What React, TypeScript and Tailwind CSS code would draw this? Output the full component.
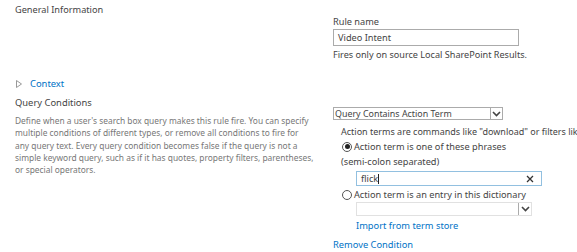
import React from "react";

const Chevron = () => (
  <svg width="9" height="6" viewBox="0 0 9 6" className="block">
    <path d="M1 1 L4.5 4.5 L8 1" fill="none" stroke="#444" strokeWidth="1.6" />
  </svg>
);

export default function App() {
  return (
    <div
      className="w-[577px] h-[252px] overflow-hidden bg-white text-[#444] relative"
      style={{ fontFamily: '"Noto Sans", "Open Sans", sans-serif' }}
    >
      {/* General information */}
      <div className="flex">
        <div className="w-[333px] pl-[15px] pt-[4px] text-[9.2px] leading-[12px]">General Information</div>
        <div className="pt-[15px]">
          <div className="text-[9.2px] leading-[13px]">Rule name</div>
          <div className="mt-[1px] w-[186px] h-[17px] border border-[#ababab] px-[4px] text-[9.2px] leading-[15px]">
            Video Intent
          </div>
          <div className="mt-[2px] text-[9.1px] leading-[13px] whitespace-nowrap">
            Fires only on source Local SharePoint Results.
          </div>
        </div>
      </div>

      {/* Context */}
      <div className="mt-[16px] flex items-center pl-[16px] h-[14px]">
        <svg width="6" height="8" viewBox="0 0 6 8" className="block">
          <path d="M0.5 0.5 L5.5 4 L0.5 7.5 Z" fill="none" stroke="#999" strokeWidth="1" />
        </svg>
        <span className="ml-[8px] text-[9.4px] leading-[14px] text-[#0072c6]">Context</span>
      </div>

      {/* Query conditions */}
      <div className="flex mt-[5px]">
        <div className="w-[333px] pl-[15px] pr-[10px]">
          <div className="text-[9.4px] leading-[14px]">Query Conditions</div>
          <div className="mt-[5px] text-[8.4px] leading-[12.3px] text-[#777] whitespace-nowrap">
            Define when a user's search box query makes this rule fire. You can specify
            <br />
            multiple conditions of different types, or remove all conditions to fire for
            <br />
            any query text. Every query condition becomes false if the query is not a
            <br />
            simple keyword query, such as if it has quotes, property filters, parentheses,
            <br />
            or special operators.
          </div>
        </div>
        <div className="pt-[11px] min-w-0 flex-1">
          <div className="flex items-center w-[170px] h-[13px] border border-[#ababab] text-[8.9px] leading-[11px]">
            <span className="flex-1 pl-[1px] whitespace-nowrap">Query Contains Action Term</span>
            <span className="w-[12px] h-[11px] border-l border-[#ababab] flex items-center justify-center">
              <Chevron />
            </span>
          </div>
          <div className="pl-[8px] mt-[5px] text-[9px] leading-[13px] whitespace-nowrap">
            Action terms are commands like "download" or filters like
          </div>
          <div className="pl-[9px] mt-[2px] flex items-center text-[9.2px] leading-[13px] whitespace-nowrap">
            <span className="w-[10px] h-[10px] rounded-full border border-[#555] flex items-center justify-center">
              <span className="w-[5px] h-[5px] rounded-full bg-[#222]" />
            </span>
            <span className="ml-[2px]">Action term is one of these phrases</span>
          </div>
          <div className="pl-[8px] mt-[2px] text-[9.2px] leading-[13px] whitespace-nowrap">(semi-colon separated)</div>
          <div className="ml-[23px] mt-[3px] w-[186px] h-[15px] border border-[#92c0e0] flex items-center px-[4px] text-[9.2px]">
            <span>flick</span>
            <span className="w-[1px] h-[10px] bg-[#222]" />
            <span className="flex-1" />
            <svg width="8" height="8" viewBox="0 0 8 8" className="block mr-[3px]">
              <path d="M1 1 L7 7 M7 1 L1 7" stroke="#333" strokeWidth="1.3" />
            </svg>
          </div>
          <div className="pl-[9px] mt-[2px] flex items-center text-[9.2px] leading-[13px] whitespace-nowrap">
            <span className="w-[10px] h-[10px] rounded-full border border-[#555]" />
            <span className="ml-[2px]">Action term is an entry in this dictionary</span>
          </div>
          <div className="ml-[23px] mt-[1px] w-[176px] h-[14px] border border-[#e1e1e1] flex justify-end">
            <span className="w-[13px] h-[12px] border-l border-[#ababab] flex items-center justify-center">
              <Chevron />
            </span>
          </div>
          <div className="ml-[23px] mt-[3px] text-[9.3px] leading-[13px] text-[#0072c6] whitespace-nowrap">
            Import from term store
          </div>
          <div className="mt-[6px] text-[9.3px] leading-[13px] text-[#0072c6] whitespace-nowrap">Remove Condition</div>
        </div>
      </div>
    </div>
  );
}
